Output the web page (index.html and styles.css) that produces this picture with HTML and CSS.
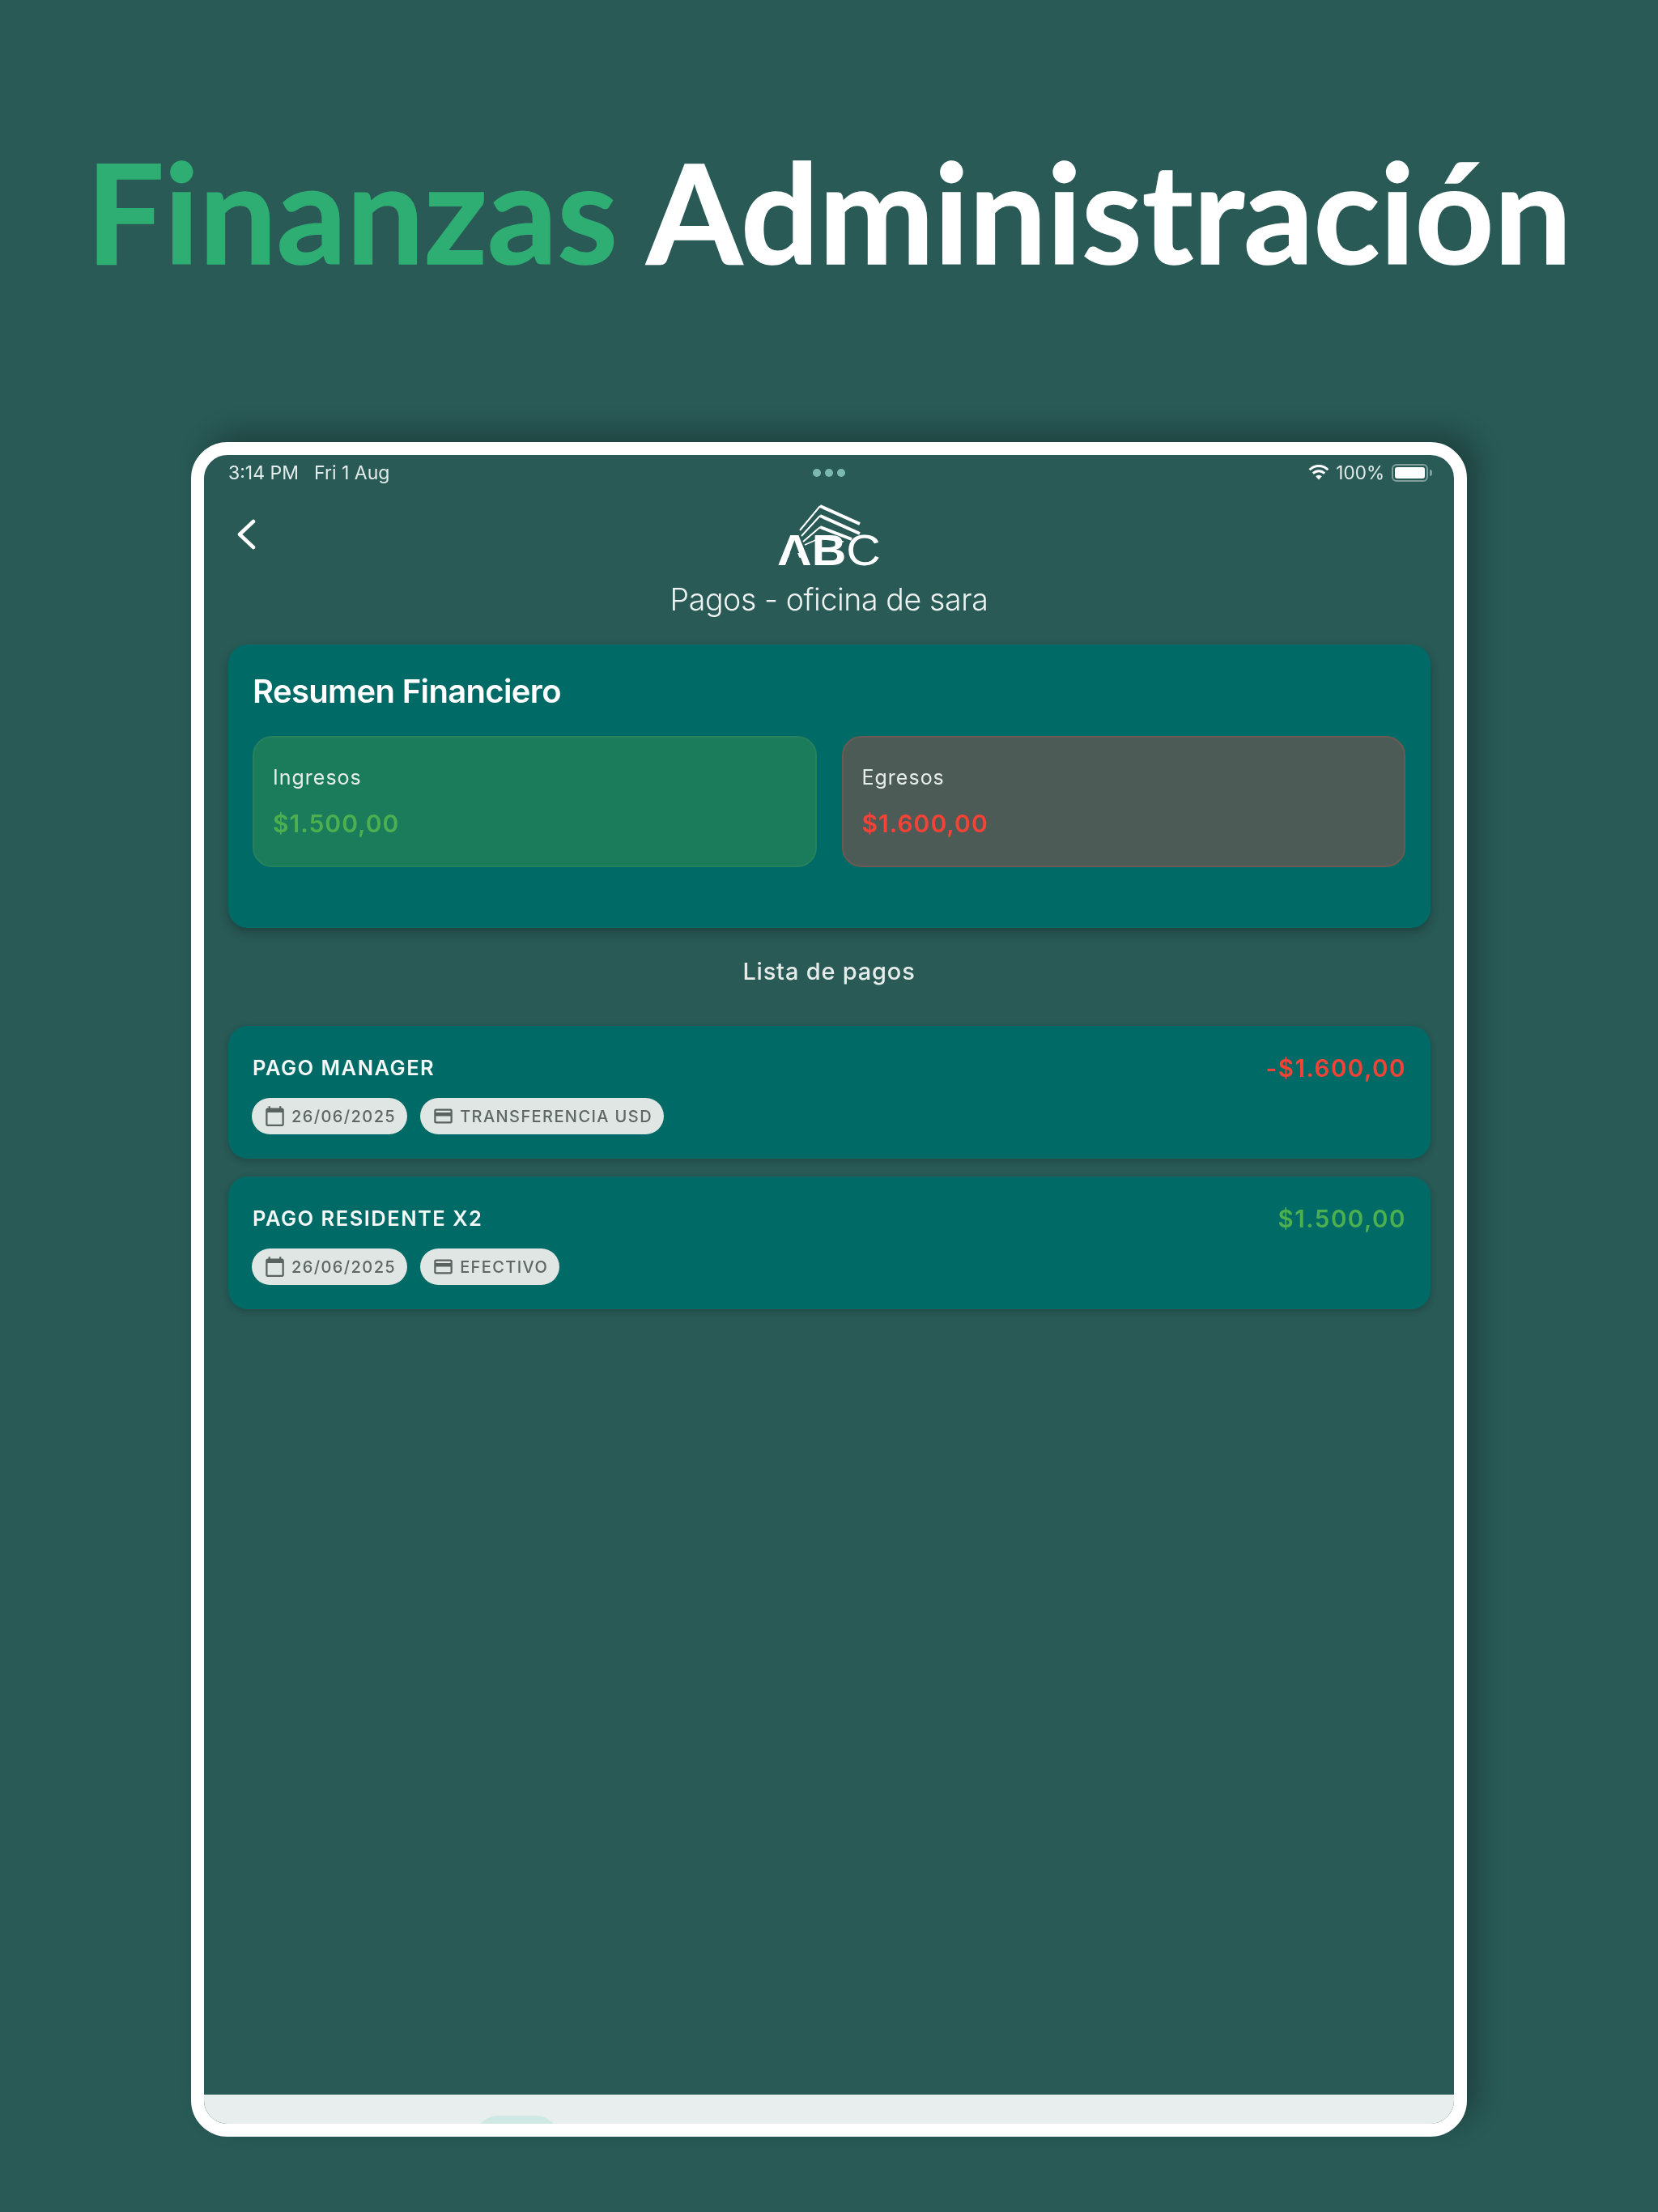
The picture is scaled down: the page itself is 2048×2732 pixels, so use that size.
FILE: index.html
```html
<!DOCTYPE html>
<html lang="es">
<head>
    <meta charset="UTF-8">
    <meta name="viewport" content="width=device-width, initial-scale=1.0">
    <title>Finanzas Administración</title>
    <link rel="stylesheet" href="styles.css">
</head>
<body>

    <h1 class="headline"><span class="headline-accent">Finanzas</span> Administración</h1>

    <div class="tablet">
        <div class="status-bar">
            <div class="status-left"><span>3:14 PM</span><span>Fri 1 Aug</span></div>
            <div class="status-dots"><i></i><i></i><i></i></div>
            <div class="status-right">
                <svg class="wifi" viewBox="0 0 26 19" width="26" height="19">
                    <path d="M13 18.5 9.2 14.2a5.4 5.4 0 0 1 7.6 0z" fill="#fff"/>
                    <path d="M5.9 10.6a10 10 0 0 1 14.2 0M1.6 6.2a16.2 16.2 0 0 1 22.8 0" fill="none" stroke="#fff" stroke-width="3"/>
                </svg>
                <span>100%</span>
                <div class="battery"><div class="battery-fill"></div></div>
                <div class="battery-nub"></div>
            </div>
        </div>

        <header class="app-header">
            <svg class="back" viewBox="0 0 24 38" width="24" height="38">
                <path d="M21 3 4 19l17 16" fill="none" stroke="#fff" stroke-width="4.5" stroke-linecap="round" stroke-linejoin="round"/>
            </svg>
            <div class="header-center">
                <svg class="logo" viewBox="0 0 128 90" width="128" height="90">
                    <text class="logo-text" x="0" y="75" textLength="128" lengthAdjust="spacingAndGlyphs">AB<tspan class="logo-c">C</tspan></text>
                    <polygon points="20.5,47 31,76 10,76" fill="#295a56"/>
                    <g fill="none" stroke="#fff">
                        <path d="M53 2 102 24" stroke-width="4"/>
                        <path d="M53 14 102 36" stroke-width="4"/>
                        <path d="M53 28 92 43" stroke-width="4"/>
                        <path d="M28 32 53 2M30 39 53 14M32 46 53 28" stroke-width="2"/>
                        <path d="M34 50 52 42 82 46" stroke-width="1.5"/>
                    </g>
                </svg>
                <div class="page-title">Pagos - oficina de sara</div>
            </div>
        </header>

        <section class="summary">
            <h2 class="summary-title">Resumen Financiero</h2>
            <div class="summary-grid">
                <div class="summary-box income">
                    <div class="box-label">Ingresos</div>
                    <div class="box-amount green">$1.500,00</div>
                </div>
                <div class="summary-box expense">
                    <div class="box-label">Egresos</div>
                    <div class="box-amount red">$1.600,00</div>
                </div>
            </div>
        </section>

        <div class="list-title">Lista de pagos</div>

        <main class="payments">
            <div class="payment">
                <div class="payment-top">
                    <span class="payment-name">PAGO MANAGER</span>
                    <span class="payment-amount red">-$1.600,00</span>
                </div>
                <div class="chips">
                    <span class="chip">
                        <svg viewBox="0 0 24 24" width="27" height="27"><path d="M20 3h-1V1h-2v2H7V1H5v2H4c-1.1 0-2 .9-2 2v16c0 1.1.9 2 2 2h16c1.1 0 2-.9 2-2V5c0-1.1-.9-2-2-2zm0 18H4V8h16v13z"/></svg>
                        26/06/2025
                    </span>
                    <span class="chip">
                        <svg viewBox="0 0 24 24" width="27" height="27"><path d="M20 4H4c-1.11 0-1.99.89-1.99 2L2 18c0 1.11.89 2 2 2h16c1.11 0 2-.89 2-2V6c0-1.11-.89-2-2-2zm0 14H4v-6h16v6zm0-10H4V6h16v2z"/></svg>
                        TRANSFERENCIA USD
                    </span>
                </div>
            </div>
            <div class="payment">
                <div class="payment-top">
                    <span class="payment-name">PAGO RESIDENTE X2</span>
                    <span class="payment-amount green">$1.500,00</span>
                </div>
                <div class="chips">
                    <span class="chip">
                        <svg viewBox="0 0 24 24" width="27" height="27"><path d="M20 3h-1V1h-2v2H7V1H5v2H4c-1.1 0-2 .9-2 2v16c0 1.1.9 2 2 2h16c1.1 0 2-.9 2-2V5c0-1.1-.9-2-2-2zm0 18H4V8h16v13z"/></svg>
                        26/06/2025
                    </span>
                    <span class="chip">
                        <svg viewBox="0 0 24 24" width="27" height="27"><path d="M20 4H4c-1.11 0-1.99.89-1.99 2L2 18c0 1.11.89 2 2 2h16c1.11 0 2-.89 2-2V6c0-1.11-.89-2-2-2zm0 14H4v-6h16v6zm0-10H4V6h16v2z"/></svg>
                        EFECTIVO
                    </span>
                </div>
            </div>
        </main>

        <nav class="bottom-nav"><div class="nav-pill"></div></nav>
    </div>

</body>
</html>
```

FILE: styles.css
```css
body {
    margin: 0;
    width: 2048px;
    height: 2732px;
    overflow: hidden;
    background: #295a56;
    font-family: Inter, "Liberation Sans", sans-serif;
    color: #fff;
}

.headline {
    margin: 0;
    height: 546px;
    box-sizing: border-box;
    padding-top: 160px;
    text-align: center;
    font-family: Lato, sans-serif;
    font-size: 170px;
    font-weight: 700;
    line-height: 200px;
    -webkit-text-stroke: 1.5px currentColor;
    color: #fff;
}

.headline-accent {
    color: #2fae74;
}

.tablet {
    width: 1576px;
    height: 2093px;
    margin-left: 236px;
    box-sizing: border-box;
    border: 16px solid #fff;
    border-radius: 45px;
    overflow: hidden;
    display: flex;
    flex-direction: column;
    box-shadow: 16px -14px 30px rgba(0, 0, 0, 0.25);
}

/* the app screenshot is slightly soft in the mockup */
.status-bar,
.app-header,
.summary,
.list-title,
.payments {
    filter: blur(0.5px);
}

.status-bar {
    height: 46px;
    flex: none;
    padding: 0 27px 3px 30px;
    box-sizing: border-box;
    display: grid;
    grid-template-columns: 1fr auto 1fr;
    align-items: center;
    font-size: 22.5px;
    color: #e3ecea;
}

.status-left {
    display: flex;
    gap: 19px;
    font-size: 23px;
}

.status-dots {
    display: flex;
    gap: 5px;
    padding-right: 3px;
}

.status-dots i {
    width: 10px;
    height: 10px;
    border-radius: 50%;
    background: #7db8ae;
}

.status-right {
    display: flex;
    align-items: center;
    justify-content: flex-end;
}

.wifi {
    margin-right: 8px;
}

.battery {
    width: 45px;
    height: 22px;
    margin-left: 9px;
    box-sizing: border-box;
    border: 2px solid #7f9f9a;
    border-radius: 6px;
    padding: 2px;
}

.battery-fill {
    height: 100%;
    background: #fff;
    border-radius: 3px;
}

.battery-nub {
    width: 3px;
    height: 8px;
    margin-left: 2px;
    background: #7f9f9a;
    border-radius: 0 3px 3px 0;
}

.app-header {
    flex: none;
    height: 188px;
    padding: 15px 0 0 40px;
    box-sizing: border-box;
    display: grid;
    grid-template-columns: 1fr auto 1fr;
}

.back {
    margin-top: 18px;
}

.header-center {
    display: flex;
    flex-direction: column;
    align-items: center;
    margin-left: -40px;
}

.logo {
    display: block;
    margin-bottom: -15px;
}

.logo-text {
    font-family: "Liberation Sans", sans-serif;
    font-size: 53px;
    font-weight: 700;
    fill: #fff;
}

.logo-c {
    font-weight: 400;
}

.page-title {
    margin-top: 21px;
    font-size: 37.5px;
    font-weight: 300;
    line-height: 44px;
    letter-spacing: -0.4px;
    color: #eef3f2;
    white-space: nowrap;
}

.summary {
    flex: none;
    margin: 0 29px 0 30px;
    height: 350px;
    box-sizing: border-box;
    padding: 34px 31px 0 30px;
    background: #006a66;
    border-radius: 24px;
    box-shadow: 0 6px 12px rgba(0, 0, 0, 0.25);
}

.summary-title {
    margin: 0 0 31px;
    font-size: 40px;
    font-weight: 600;
    line-height: 48px;
    letter-spacing: -0.65px;
}

.summary-grid {
    display: grid;
    grid-template-columns: 1fr 1fr;
    gap: 31px;
}

.summary-box {
    height: 162px;
    box-sizing: border-box;
    padding: 34px 23px 0;
    border: 2px solid;
    border-radius: 24px;
}

.income {
    background: #1b7c5c;
    border-color: #25825c;
}

.expense {
    background: #4c5b55;
    border-color: #6b5a53;
}

.box-label {
    font-size: 25px;
    line-height: 30px;
    letter-spacing: 1px;
    color: #e6ecea;
}

.box-amount {
    margin-top: 24px;
    font-size: 30px;
    font-weight: 600;
    line-height: 36px;
    letter-spacing: 1px;
}

.green {
    color: #4caf50;
}

.red {
    color: #f44336;
}

.list-title {
    flex: none;
    margin: 37px 0 50px;
    text-align: center;
    font-size: 29px;
    font-weight: 500;
    line-height: 34px;
    letter-spacing: 0.8px;
    color: #e6ecea;
}

.payments {
    flex: 1;
    margin: 0 29px 0 30px;
    display: flex;
    flex-direction: column;
    gap: 22px;
}

.payment {
    height: 164px;
    box-sizing: border-box;
    padding: 37px 30px 0 29px;
    background: #006a66;
    border-radius: 24px;
    box-shadow: 0 3px 8px rgba(0, 0, 0, 0.2);
}

.payment-top {
    height: 30px;
    display: flex;
    justify-content: space-between;
    align-items: flex-start;
}

.payment-name {
    font-size: 25.5px;
    font-weight: 600;
    line-height: 30px;
    letter-spacing: 1.5px;
    color: #f4f8f7;
    padding-left: 1px;
}

.payment-amount {
    font-size: 29.5px;
    font-weight: 600;
    line-height: 30px;
    letter-spacing: 1.5px;
}

.chips {
    display: flex;
    gap: 16px;
    margin-top: 22px;
}

.chip {
    height: 45px;
    box-sizing: border-box;
    padding: 0 14px 0 15px;
    display: flex;
    align-items: center;
    gap: 7px;
    background: #dfe6e3;
    border-radius: 23px;
    font-size: 20px;
    font-weight: 500;
    letter-spacing: 1.4px;
    color: #5f6765;
}

.chip svg {
    fill: #5a6260;
    flex: none;
}

.bottom-nav {
    flex: none;
    height: 36px;
    background: #e8eeed;
    overflow: hidden;
}

.nav-pill {
    width: 103px;
    height: 56px;
    margin: 26px 0 0 335px;
    background: #cfe8e3;
    border-radius: 28px;
}
```
